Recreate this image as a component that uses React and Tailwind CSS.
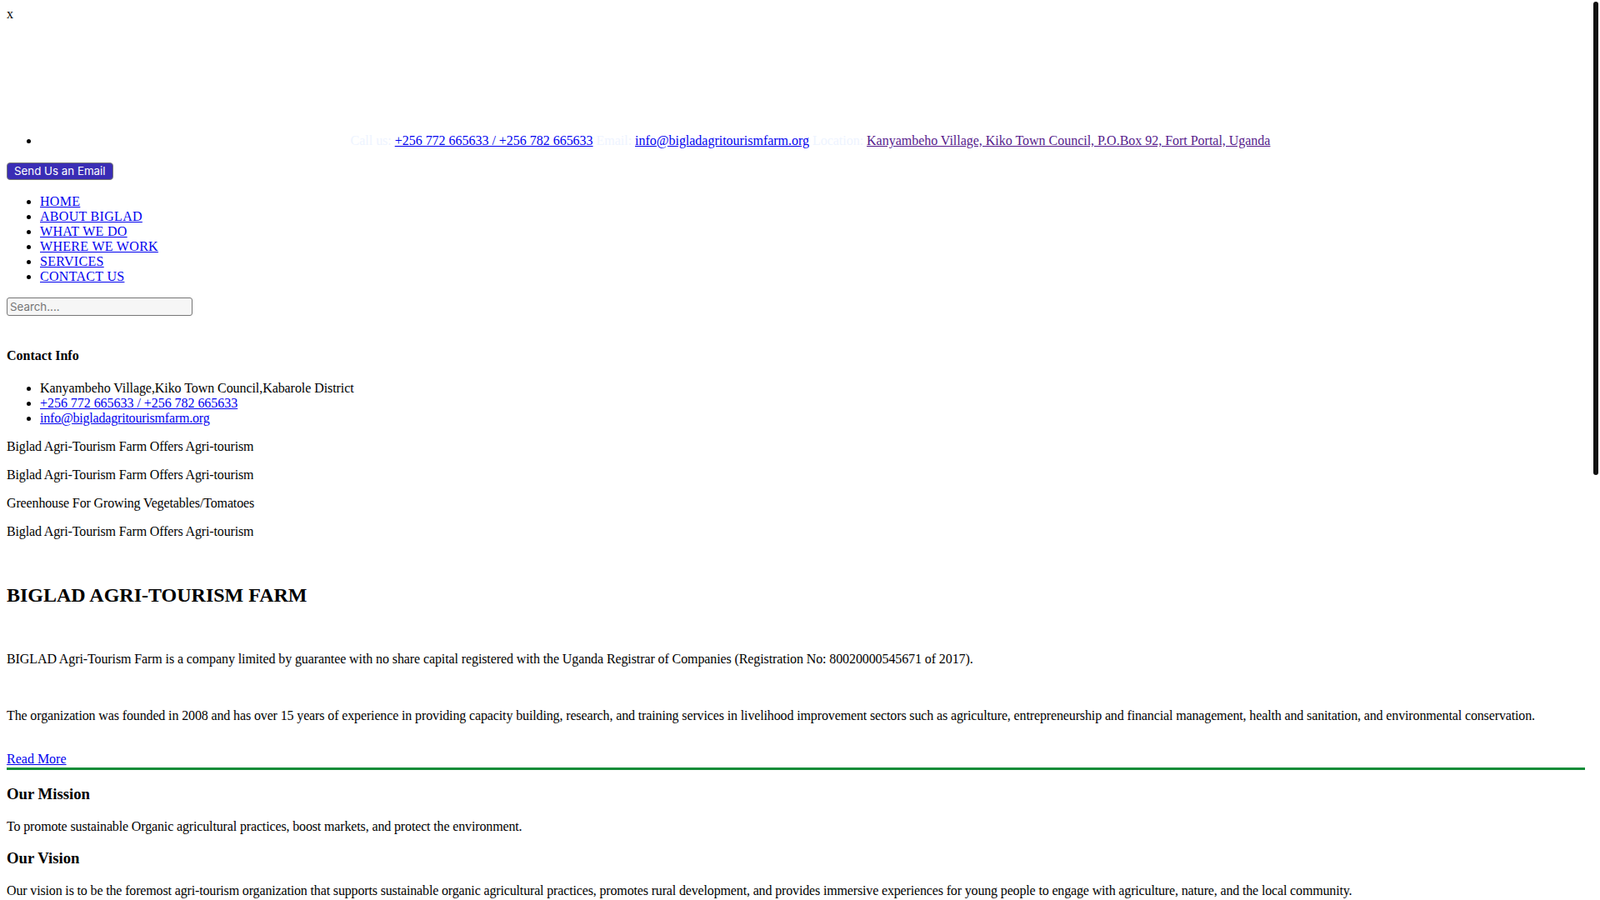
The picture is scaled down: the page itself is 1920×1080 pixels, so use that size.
export default function App() {
  const nav = ['HOME', 'ABOUT BIGLAD', 'WHAT WE DO', 'WHERE WE WORK', 'SERVICES', 'CONTACT US'];
  const slides = [
    'Biglad Agri-Tourism Farm Offers Agri-tourism',
    'Biglad Agri-Tourism Farm Offers Agri-tourism',
    'Greenhouse For Growing Vegetables/Tomatoes',
    'Biglad Agri-Tourism Farm Offers Agri-tourism',
  ];

  return (
    <div className="flex h-screen overflow-hidden bg-white text-black text-[16px] leading-[18px] font-['Liberation_Serif',serif]">
      <div className="flex-1 min-w-0 p-2">
        <div>x</div>

        {/* top bar */}
        <ul className="mt-[134px] list-disc pl-10">
          <li className="text-center pr-[5px] tracking-[-0.02px]">
            <span className="text-[#eef4ff]">Call us: </span>
            <a href="#" className="text-[#0000ee] underline">+256 772 665633 / +256 782 665633</a>
            <span className="text-[#eef4ff]"> Email: </span>
            <a href="#" className="text-[#0000ee] underline">info@bigladagritourismfarm.org</a>
            <span className="text-[#eef4ff]"> Location: </span>
            <a href="#" className="text-[#551a8b] underline">Kanyambeho Village, Kiko Town Council, P.O.Box 92, Fort Portal, Uganda</a>
          </li>
        </ul>

        <div className="mt-[17px]">
          <button
            type="button"
            className="h-[21px] px-[8px] bg-[#3a2db5] text-white border border-[#767676] rounded-[4px] text-[13.33px] leading-[17px] font-['Inter',sans-serif]"
          >
            Send Us an Email
          </button>
        </div>

        <ul className="mt-[17px] list-disc pl-10 tracking-[0.3px]">
          {nav.map((n) => (
            <li key={n}>
              <a href="#" className="text-[#0000ee] underline">{n}</a>
            </li>
          ))}
        </ul>

        <div className="mt-4">
          <input
            type="text"
            placeholder="Search...."
            className="w-[223px] h-[22px] px-[3px] bg-[#f6f6f6] border border-[#767676] rounded-[3px] text-[13.33px] font-['Inter',sans-serif] placeholder:text-[#757575] outline-none"
          />
        </div>

        <h4 className="mt-[39px] font-bold">Contact Info</h4>
        <ul className="mt-[21px] list-disc pl-10">
          <li className="tracking-[-0.07px]">Kanyambeho Village,Kiko Town Council,Kabarole District</li>
          <li><a href="#" className="text-[#0000ee] underline tracking-[-0.04px]">+256 772 665633 / +256 782 665633</a></li>
          <li><a href="#" className="text-[#0000ee] underline tracking-[-0.2px]">info@bigladagritourismfarm.org</a></li>
        </ul>

        {slides.map((s, i) => (
          <p key={i} className="mt-4 tracking-[-0.14px]">{s}</p>
        ))}

        <h2 className="mt-[53px] text-[24px] leading-[28px] font-bold">BIGLAD AGRI-TOURISM FARM</h2>

        <p className="mt-[54px] tracking-[-0.1px]">
          BIGLAD Agri-Tourism Farm is a company limited by guarantee with no share capital registered with the Uganda Registrar of Companies (Registration No: 80020000545671 of 2017).
        </p>
        <p className="mt-[50px] tracking-[-0.13px]">
          The organization was founded in 2008 and has over 15 years of experience in providing capacity building, research, and training services in livelihood improvement sectors such as agriculture, entrepreneurship and financial management, health and sanitation, and environmental conservation.
        </p>
        <p className="mt-[34px]">
          <a href="#" className="text-[#0000ee] underline">Read More</a>
        </p>
        <div className="mt-[1px] h-[3px] bg-[#128c38]" />

        <h3 className="mt-[18px] text-[18.72px] leading-[22px] font-bold">Our Mission</h3>
        <p className="mt-[19px] tracking-[-0.14px]">
          To promote sustainable Organic agricultural practices, boost markets, and protect the environment.
        </p>
        <h3 className="mt-[18px] text-[18.72px] leading-[22px] font-bold">Our Vision</h3>
        <p className="mt-[19px] tracking-[-0.15px]">
          Our vision is to be the foremost agri-tourism organization that supports sustainable organic agricultural practices, promotes rural development, and provides immersive experiences for young people to engage with agriculture, nature, and the local community.
        </p>
      </div>

      {/* scrollbar */}
      <div className="w-[10px] shrink-0 flex justify-center">
        <div className="mt-[2px] w-[6px] h-[568px] rounded-full bg-[#111]" />
      </div>
    </div>
  );
}
